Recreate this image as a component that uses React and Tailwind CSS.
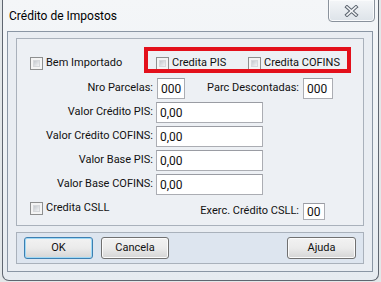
import React from "react";

function Check({ label }) {
  return (
    <div className="flex items-center">
      <div className="w-[13px] h-[13px] border border-[#8e8f8f] bg-[#f4f4f4] p-[2px] shrink-0">
        <div className="w-full h-full bg-gradient-to-br from-[#c5c9ce] to-[#f2f3f4] border border-[#d6d8db]" />
      </div>
      <span className="ml-[3px] whitespace-nowrap">{label}</span>
    </div>
  );
}

function Field({ value, w, h = "h-[21px]" }) {
  return (
    <div
      className={`${w} ${h} border border-[#abadb3] border-t-[#9a9ca3] bg-white px-[3px] flex items-center text-[12px] leading-none shrink-0`}
    >
      {value}
    </div>
  );
}

function Btn({ label, w, focus }) {
  return (
    <div
      className={`${w} h-[22px] rounded-[3px] border ${
        focus
          ? "border-[#3c7fb1] shadow-[inset_0_0_0_1px_#9fd9f6]"
          : "border-[#707070] shadow-[inset_0_0_0_1px_#fbfbfb]"
      } bg-gradient-to-b from-[#f2f2f2] via-[#ebebeb] to-[#d5d5d5] flex items-center justify-center shrink-0`}
    >
      {label}
    </div>
  );
}

function Row({ label, children }) {
  return (
    <div className="flex items-center h-[21px]">
      <div className="w-[136px] text-right whitespace-nowrap">{label}</div>
      <div className="ml-[3px] flex items-center">{children}</div>
    </div>
  );
}

export default function App() {
  return (
    <div className="w-[381px] h-[282px] bg-[#e3e7e9] overflow-hidden relative font-['Roboto','Liberation_Sans',sans-serif] text-[11px] text-[#111]">
      <div className="ml-[2px] w-[377px] h-[281px] border-x border-b border-[#5f6670] rounded-b-[7px] bg-gradient-to-b from-[#f4f6f8] via-[#eef2f5] to-[#e6ebf0] relative flex flex-col">
        {/* Title bar */}
        <div className="h-[31px] flex items-center pl-[6px] text-[12px] text-black">
          Crédito de Impostos
        </div>
        {/* Close button */}
        <div className="absolute top-[-1px] right-[3px] w-[47px] h-[23px] rounded-b-[4px] border border-[#8a929c] bg-gradient-to-b from-[#f4f6f8] to-[#dde3e9] shadow-[inset_0_0_0_1px_#fafbfc] flex items-center justify-center">
          <svg width="15" height="12" viewBox="0 0 15 12">
            <path d="M3 2 L12 10 M12 2 L3 10" stroke="#5c6570" strokeWidth="3.6" strokeLinecap="square" fill="none" />
            <path d="M3 2 L12 10 M12 2 L3 10" stroke="#f4f6f8" strokeWidth="1.6" strokeLinecap="square" fill="none" />
          </svg>
        </div>
        {/* Inner panel */}
        <div className="ml-[4px] w-[366px] h-[241px] border border-[#8a96a4] bg-[#e9edf2] px-[8px] pt-[6px]">
          {/* Group box */}
          <div className="w-[348px] h-[188px] border border-[#a9b1bb] bg-[#edf0f4] flex flex-col">
            <div className="mt-[18px] h-[13px] flex items-center">
              <div className="w-[139px] pl-[13px]">
                <Check label="Bem Importado" />
              </div>
              <div className="w-[92px]">
                <Check label="Credita PIS" />
              </div>
              <div>
                <Check label="Credita COFINS" />
              </div>
            </div>
            <div className="mt-[8px] flex flex-col gap-[3px]">
              <div className="flex items-center h-[21px]">
                <div className="w-[136px] text-right whitespace-nowrap">Nro Parcelas:</div>
                <div className="ml-[4px]">
                  <Field value="000" w="w-[28px]" />
                </div>
                <div className="w-[114px] text-right whitespace-nowrap">Parc Descontadas:</div>
                <div className="ml-[4px]">
                  <Field value="000" w="w-[30px]" />
                </div>
              </div>
              <Row label="Valor Crédito PIS:">
                <Field value="0,00" w="w-[107px]" />
              </Row>
              <Row label="Valor Crédito COFINS:">
                <Field value="0,00" w="w-[107px]" />
              </Row>
              <Row label="Valor Base PIS:">
                <Field value="0,00" w="w-[107px]" />
              </Row>
              <Row label="Valor Base COFINS:">
                <Field value="0,00" w="w-[107px]" />
              </Row>
            </div>
            <div className="flex items-start">
              <div className="w-[140px] pl-[13px] mt-[5px]">
                <Check label="Credita CSLL" />
              </div>
              <div className="w-[142px] text-right whitespace-nowrap mt-[8px] h-[17px] flex items-center justify-end">
                Exerc. Crédito CSLL:
              </div>
              <div className="ml-[4px] mt-[8px]">
                <Field value="00" w="w-[22px]" h="h-[17px]" />
              </div>
            </div>
          </div>
          {/* Button bar */}
          <div className="mt-[6px] w-[348px] h-[32px] border border-[#a9b1bb] bg-[#dde5ef] flex items-center px-[7px]">
            <Btn label="OK" w="w-[69px]" focus />
            <div className="ml-[8px]">
              <Btn label="Cancela" w="w-[68px]" />
            </div>
            <div className="ml-auto">
              <Btn label="Ajuda" w="w-[69px]" />
            </div>
          </div>
        </div>
      </div>
      {/* Red annotation */}
      <div className="absolute left-[144px] top-[47px] w-[207px] h-[26px] border-[4px] border-[#e3101b]" />
    </div>
  );
}
